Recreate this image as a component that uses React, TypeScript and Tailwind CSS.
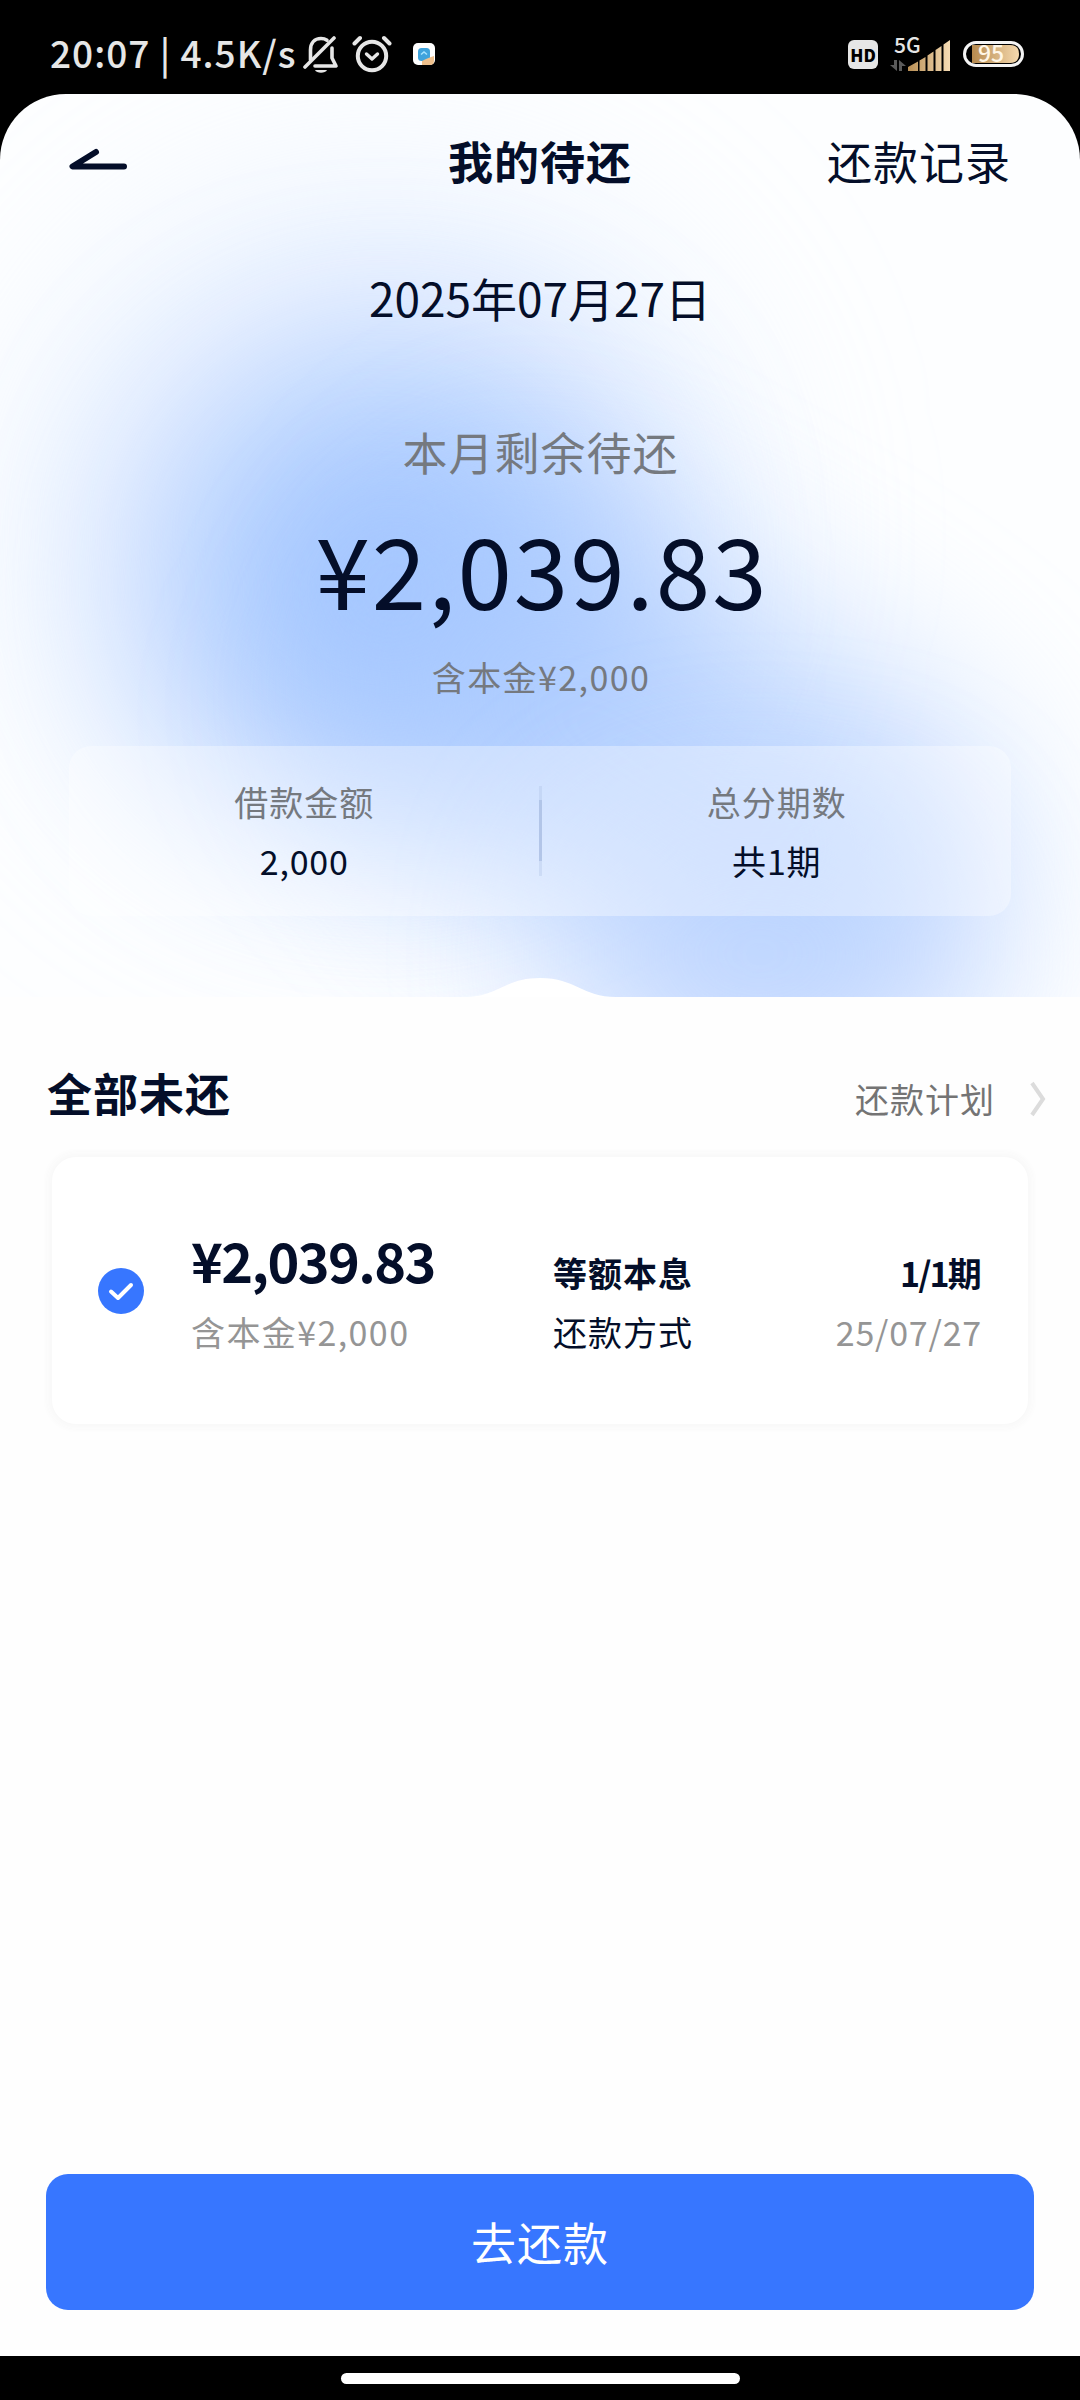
import React from "react";

interface Summary {
  label: string;
  value: string;
}

interface Bill {
  amount: string;
  principal: string;
  method: string;
  period: string;
  date: string;
}

const summary: Summary[] = [
  { label: "借款金额", value: "2,000" },
  { label: "总分期数", value: "共1期" },
];

const bills: Bill[] = [
  {
    amount: "¥2,039.83",
    principal: "含本金¥2,000",
    method: "等额本息",
    period: "1/1期",
    date: "25/07/27",
  },
];

const StatusBar: React.FC = () => (
  <div className="flex h-[94px] items-center bg-black pt-[14px] pr-[56px] pl-[50px] text-[#e6e6e6]">
    <span className="mb-[4px] text-[37px] leading-[40px] font-medium tracking-[1px] whitespace-pre">
      20:07 | 4.5K/s
    </span>
    <svg className="ml-[7px] h-[38px] w-[36px]" viewBox="0 0 36 38" fill="none">
      <path
        d="M7.500 25V15C7.500 8 11.500 3.500 18 3.500C20.500 3.500 22.500 4.200 24 5.300M29 13V23L33 31H12"
        stroke="#e6e6e6"
        strokeWidth="3.600"
        strokeLinejoin="round"
        strokeLinecap="round"
      />
      <path d="M2 32L31 3" stroke="#e6e6e6" strokeWidth="3.600" strokeLinecap="round" />
      <path d="M12 35H24C22.500 38.500 13.500 38.500 12 35Z" fill="#e6e6e6" />
    </svg>
    <svg
      className="ml-[13px] h-[38px] w-[40px]"
      viewBox="0 0 40 38"
      fill="none"
      stroke="#e6e6e6"
      strokeLinecap="round"
      strokeLinejoin="round"
    >
      <circle cx="20" cy="21" r="14.200" strokeWidth="4" />
      <path d="M14.500 19L20 24L25.500 19" strokeWidth="3.400" />
      <path d="M2.500 8.500L8 3M37.500 8.500L32 3" strokeWidth="4" />
    </svg>
    <svg className="ml-[21px] h-[22px] w-[22px]" viewBox="0 0 22 22">
      <rect width="22" height="22" rx="5" fill="#ffffff" />
      <rect x="5" y="5" width="12" height="13" rx="3.500" fill="#3fa3dc" />
      <path d="M8 11.500L11 9L14 11.500" stroke="#a8e4ff" strokeWidth="1.500" fill="none" />
      <path d="M9 22V18L13 16L18 14L21 13V18C21 20.500 19.500 22 17 22Z" fill="#eec08c" />
    </svg>
    <div className="ml-auto flex h-[29px] w-[30px] items-center justify-center rounded-[6px] bg-[#e6e6e6] text-[17px] leading-none font-black text-black">
      HD
    </div>
    <svg className="ml-[12px] h-[52px] w-[62px]" viewBox="0 -8 62 52">
      <defs>
        <linearGradient id="signal" x1="0" x2="1" y1="0" y2="0">
          <stop offset="0" stopColor="#b98f55" />
          <stop offset="1" stopColor="#f6dcb4" />
        </linearGradient>
      </defs>
      <text
        x="4"
        y="16.500"
        fontSize="21"
        fontWeight="500"
        fill="#e6e6e6"
        fontFamily="Noto Sans CJK SC, sans-serif"
      >
        5G
      </text>
      <path d="M4 24H7V35L0 29H4ZM9 35V24L16 30H12V35Z" fill="#5a5a5a" />
      <path
        d="M18 35V31L28 25.500V35ZM29.500 35V24.500L35.500 21V35ZM37.500 35V19.500L43.500 15.500V35ZM45.500 35V14L51.500 10V35ZM53.500 35V8.500L60 4V35Z"
        fill="url(#signal)"
      />
    </svg>
    <svg className="ml-[11px] h-[38px] w-[61px]" viewBox="0 -6 61 38">
      <defs>
        <linearGradient id="battery" x1="0" x2="1" y1="0" y2="0">
          <stop offset="0" stopColor="#b5894e" />
          <stop offset="1" stopColor="#f5d9ae" />
        </linearGradient>
      </defs>
      <rect x="1.500" y="1.500" width="58" height="23" rx="11.500" fill="none" stroke="#f4f4f4" strokeWidth="3" />
      <path d="M9 4H47Q56 4 56 13Q56 22 47 22H9Z" fill="url(#battery)" />
      <text
        x="28"
        y="21"
        fontSize="23"
        fontWeight="500"
        textAnchor="middle"
        fill="#fff6e6"
        fontFamily="Noto Sans CJK SC, sans-serif"
      >
        95
      </text>
    </svg>
  </div>
);

const Header: React.FC = () => (
  <div className="grid h-[134px] grid-cols-3 items-center pr-[69px] pl-[69px]">
    <svg className="h-[28px] w-[60px]" viewBox="0 0 60 28" fill="none">
      <path
        d="M27 5L3.500 19.500H55"
        stroke="#040e29"
        strokeWidth="6"
        strokeLinecap="round"
        strokeLinejoin="round"
      />
    </svg>
    <h1 className="text-center text-[45px] leading-[60px] font-bold tracking-[1px]">我的待还</h1>
    <span className="text-right text-[45px] leading-[60px] tracking-[1px]">还款记录</span>
  </div>
);

const SummaryCard: React.FC = () => (
  <div className="mx-[69px] mt-[44px] flex h-[170px] items-center rounded-[22px] bg-white/35">
    {summary.map((item, index) => (
      <React.Fragment key={item.label}>
        {index > 0 && (
          <div className="flex w-[3px] flex-col">
            <div className="h-[14px] bg-[#a9bde2]/30" />
            <div className="h-[61px] bg-[#a9bde2]/80" />
            <div className="h-[15px] bg-[#a9bde2]/30" />
          </div>
        )}
        <div className="flex flex-1 flex-col items-center gap-[9px] pl-[1px] text-[34px] leading-[50px]">
          <span className="tracking-[1px] text-[#75797f]">{item.label}</span>
          <span className="tracking-[0.8px]">{item.value}</span>
        </div>
      </React.Fragment>
    ))}
  </div>
);

const Overview: React.FC = () => (
  <div className="relative h-[903px] overflow-hidden rounded-t-[66px] bg-[#fdfeff]">
    {/* soft blue glow behind the amount */}
    <div className="absolute top-[130px] left-[60px] h-[620px] w-[640px] rounded-full bg-[#cfe1ff]/60 blur-[110px]" />
    <div className="absolute top-[280px] left-[170px] h-[430px] w-[450px] rounded-full bg-[#98bfff]/85 blur-[95px]" />
    <div className="absolute top-[500px] left-[330px] h-[360px] w-[680px] rotate-[32deg] rounded-full bg-[#a9c9ff]/75 blur-[90px]" />
    <div className="absolute top-[720px] left-[560px] h-[280px] w-[400px] rounded-full bg-[#b7d1ff]/60 blur-[80px]" />
    <div className="relative">
      <Header />
      <p className="mt-[39px] text-center text-[46px] leading-[60px]">2025年07月27日</p>
      <p className="mt-[95px] pl-[1px] text-center text-[45px] leading-[60px] tracking-[1px] text-[#75797f]">
        本月剩余待还
      </p>
      <p className="mt-[25px] pl-[4px] text-center text-[98px] leading-[120px] tracking-[2px]">
        ¥2,039.83
      </p>
      <p className="mt-[25px] pl-[2px] text-center text-[34px] leading-[50px] tracking-[1.4px] text-[#75797f]">
        含本金¥2,000
      </p>
      <SummaryCard />
    </div>
    <svg className="absolute bottom-0 left-[464px] h-[19px] w-[152px]" viewBox="0 0 152 19">
      <path d="M0 19C34 19 40 0 76 0C112 0 118 19 152 19Z" fill="#ffffff" />
    </svg>
  </div>
);

const BillCard: React.FC<{ bill: Bill }> = ({ bill }) => (
  <div className="mx-[52px] flex h-[267px] items-center rounded-[24px] bg-white px-[46px] shadow-[0_0_6px_5px_#f9f9f9]">
    <svg className="h-[46px] w-[46px]" viewBox="0 0 46 46" fill="none">
      <circle cx="23" cy="23" r="23" fill="#3776ff" />
      <path
        d="M13 23.500L20 30L33 17"
        stroke="#ffffff"
        strokeWidth="4"
        strokeLinecap="round"
        strokeLinejoin="round"
      />
    </svg>
    <div className="mt-[4px] ml-[47px] w-[362px]">
      <p className="text-[54px] leading-[64px] font-bold tracking-[-1.6px]">{bill.amount}</p>
      <p className="mt-[15px] text-[34px] leading-[50px] tracking-[1.4px] text-[#959595]">
        {bill.principal}
      </p>
    </div>
    <div className="mt-[23px] text-[34px] leading-[50px] tracking-[1px]">
      <p className="font-bold">{bill.method}</p>
      <p className="mt-[9px]">还款方式</p>
    </div>
    <div className="mt-[23px] ml-auto text-right text-[34px] leading-[50px]">
      <p className="pr-[2px] font-bold tracking-[-1.8px]">{bill.period}</p>
      <p className="mt-[9px] tracking-[0.8px] text-[#959595]">{bill.date}</p>
    </div>
  </div>
);

const App: React.FC = () => {
  return (
    <div className="flex h-[2400px] w-[1080px] flex-col bg-black font-['Noto_Sans_CJK_SC',sans-serif] text-[#040e29]">
      <StatusBar />
      <Overview />
      <div className="flex flex-1 flex-col bg-[#fefefe]">
        <div className="flex items-center justify-between pt-[65px] pr-[33px] pl-[47px]">
          <h2 className="text-[45px] leading-[60px] font-bold tracking-[1px]">全部未还</h2>
          <div className="flex items-center pt-[12px]">
            <span className="text-[34px] leading-[50px] tracking-[1px] text-[#747474]">
              还款计划
            </span>
            <svg className="ml-[34px] h-[36px] w-[18px]" viewBox="0 0 18 36" fill="none">
              <path d="M3 2L14 18L3 34" stroke="#dcdcdc" strokeWidth="4" />
            </svg>
          </div>
        </div>
        <div className="mt-[33px]">
          {bills.map((bill) => (
            <BillCard key={bill.date} bill={bill} />
          ))}
        </div>
        <div className="mt-auto px-[46px] pb-[46px]">
          <button className="h-[136px] w-full rounded-[22px] bg-[#3776ff] text-[45px] tracking-[1px] text-white">
            去还款
          </button>
        </div>
      </div>
      <div className="flex h-[44px] justify-center bg-black pt-[17px]">
        <div className="h-[11px] w-[399px] rounded-full bg-white" />
      </div>
    </div>
  );
};

export default App;
